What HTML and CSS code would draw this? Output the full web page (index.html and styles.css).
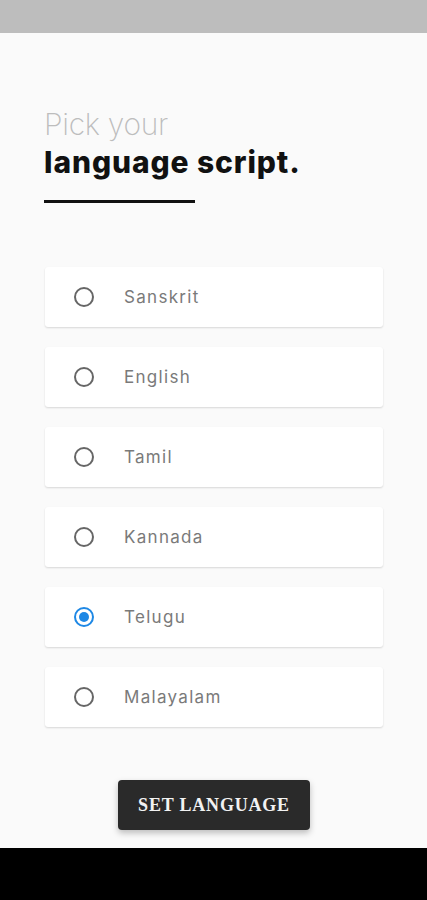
FILE: index.html
```html
<!DOCTYPE html>
<html>
<head>
    <title>Pick your language script</title>
    <meta name="viewport" content="width=device-width, initial-scale=1.0">
    <link rel="stylesheet" href="styles.css">
</head>
<body>
    <div class="status-bar"></div>

    <main class="screen">
        <h1 class="title">
            <span class="title-light">Pick your</span>
            <span class="title-bold">language script.</span>
        </h1>
        <div class="title-rule"></div>

        <div class="options">
            <label class="option">
                <span class="radio"></span>
                <span class="option-label">Sanskrit</span>
            </label>
            <label class="option">
                <span class="radio"></span>
                <span class="option-label">English</span>
            </label>
            <label class="option">
                <span class="radio"></span>
                <span class="option-label">Tamil</span>
            </label>
            <label class="option">
                <span class="radio"></span>
                <span class="option-label">Kannada</span>
            </label>
            <label class="option">
                <span class="radio checked"></span>
                <span class="option-label">Telugu</span>
            </label>
            <label class="option">
                <span class="radio"></span>
                <span class="option-label">Malayalam</span>
            </label>
        </div>

        <div class="actions">
            <button class="set-button">Set Language</button>
        </div>
    </main>

    <div class="nav-bar"></div>
</body>
</html>
```

FILE: styles.css
```css
:root {
    --background: #fafafa;
    --card: #ffffff;
    --text-muted: #7a7a7a;
    --radio: #666666;
    --accent: #1e88e5;
    --button: #2a2a2a;
}

* {
    box-sizing: border-box;
}

body {
    margin: 0;
    height: 900px;
    display: flex;
    flex-direction: column;
    background: var(--background);
    font-family: "Inter", "Noto Sans", sans-serif;
    overflow: hidden;
}

.status-bar {
    height: 33px;
    background: #bdbdbd;
    flex-shrink: 0;
}

.screen {
    flex: 1;
    padding: 73px 45px 0 44px;
}

.title {
    margin: 0;
    font-weight: normal;
    display: flex;
    flex-direction: column;
}

.title-light {
    font-size: 30px;
    font-weight: 200;
    color: #bdbdbd;
    letter-spacing: -0.3px;
    line-height: 36px;
}

.title-bold {
    font-size: 30px;
    font-weight: 800;
    color: #111;
    line-height: 40px;
    letter-spacing: 0.9px;
}

.title-rule {
    width: 151px;
    height: 3px;
    background: #111;
    margin-top: 18px;
}

.options {
    margin-top: 64px;
    display: flex;
    flex-direction: column;
    gap: 20px;
    width: 338px;
    margin-left: 1px;
}

.option {
    height: 60px;
    background: var(--card);
    border-radius: 3px;
    box-shadow: 0 1px 2px rgba(0, 0, 0, 0.14);
    display: flex;
    align-items: center;
    padding-left: 29px;
}

.radio {
    width: 20px;
    height: 20px;
    border: 2px solid var(--radio);
    border-radius: 50%;
    position: relative;
    flex-shrink: 0;
}

.radio.checked {
    border-color: var(--accent);
}

.radio.checked::after {
    content: "";
    position: absolute;
    top: 3px;
    left: 3px;
    width: 10px;
    height: 10px;
    border-radius: 50%;
    background: var(--accent);
}

.option-label {
    margin-left: 30px;
    font-size: 17px;
    color: var(--text-muted);
    letter-spacing: 1.3px;
}

.actions {
    display: flex;
    justify-content: center;
    margin-top: 53px;
    padding-left: 2px;
}

.set-button {
    width: 192px;
    height: 50px;
    background: var(--button);
    color: #f2f2f2;
    border: none;
    border-radius: 4px;
    font-family: "Liberation Serif", "DejaVu Serif", serif;
    font-size: 18px;
    font-weight: 700;
    text-transform: uppercase;
    letter-spacing: 0.8px;
    box-shadow: 0 3px 6px rgba(0, 0, 0, 0.25);
}

.nav-bar {
    height: 52px;
    background: #000;
    flex-shrink: 0;
}
```
